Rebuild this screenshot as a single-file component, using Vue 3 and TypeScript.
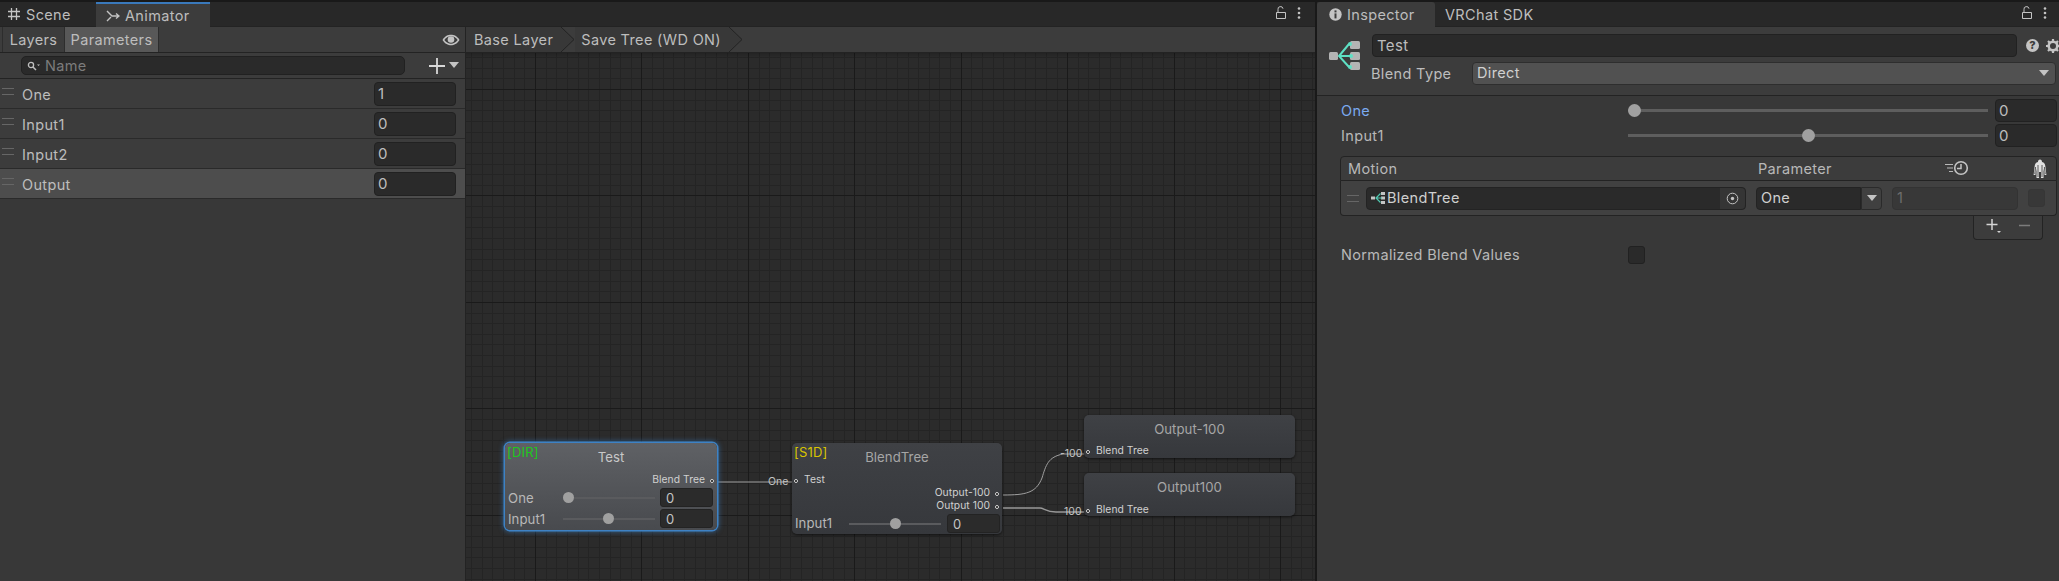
<script setup lang="ts">
interface Param { name: string; value: string; selected?: boolean }
interface GridLine { pos: number; major: boolean }

const params: Param[] = [
  { name: 'One', value: '1' },
  { name: 'Input1', value: '0' },
  { name: 'Input2', value: '0' },
  { name: 'Output', value: '0', selected: true },
]
const crumbs: string[] = ['Base Layer', 'Save Tree (WD ON)']

const step = 10.643
function gridLines(origin: number, extent: number): GridLine[] {
  const lines: GridLine[] = []
  for (let i = -10; i * step + origin < extent; i++) {
    const pos = Math.round(i * step + origin)
    if (pos >= 0) lines.push({ pos: pos + 0.5, major: ((i % 10) + 10) % 10 === 0 })
  }
  return lines
}
const verticals = gridLines(69, 850)
const horizontals = gridLines(36, 530)
</script>

<template>
  <div class="app">
    <section class="animator">
      <header class="tabbar">
        <div class="tab scene-tab">
          <svg class="ti" width="14" height="14" viewBox="0 0 14 14"><path d="M4.500 1v12M9.500 1v12M1 4.500h12M1 9.500h12" stroke="#c4c4c4" stroke-width="1.300" fill="none"/></svg>
          <span>Scene</span>
        </div>
        <div class="tab active anim-tab">
          <svg class="ti" width="14" height="14" viewBox="0 0 14 14"><path d="M1 2l5 5h6M1 12l4-4M10 4.500l3 2.500-3 2.500" stroke="#c4c4c4" stroke-width="1.400" fill="none"/></svg>
          <span>Animator</span>
        </div>
        <div class="tab-tools">
          <svg width="14" height="14" viewBox="0 0 14 14"><path d="M2.500 6.500h9v6h-9zM4 6.500V3.500a2.500 2.500 0 0 1 5 -.8" stroke="#c4c4c4" stroke-width="1" fill="none"/></svg>
          <svg width="4" height="14" viewBox="0 0 4 14"><circle cx="2" cy="2.500" r="1.300" fill="#c4c4c4"/><circle cx="2" cy="7" r="1.300" fill="#c4c4c4"/><circle cx="2" cy="11.500" r="1.300" fill="#c4c4c4"/></svg>
        </div>
      </header>

      <div class="anim-body">
        <aside class="left">
          <div class="left-toolbar">
            <div class="seg">Layers</div>
            <div class="seg on">Parameters</div>
            <svg class="eye" width="18" height="12" viewBox="0 0 18 12"><path d="M0.500 6C3 2 6 .8 9 .8S15 2 17.500 6C15 10 12 11.200 9 11.200S3 10 .5 6z" fill="#c4c4c4"/><path d="M2.300 6C4.500 3.300 6.500 2.300 9 2.300S13.500 3.300 15.700 6C13.500 8.700 11.500 9.700 9 9.700S4.500 8.700 2.300 6z" fill="#3c3c3c"/><circle cx="9" cy="5.500" r="3.300" fill="#c4c4c4"/></svg>
          </div>
          <div class="search-row">
            <div class="search">
              <svg width="13" height="10" viewBox="0 0 13 10"><circle cx="4" cy="4" r="2.600" stroke="#c0c0c0" stroke-width="1.300" fill="none"/><path d="M6 6l3 3" stroke="#c0c0c0" stroke-width="1.500"/><path d="M10 3.500h3l-1.500 1.500z" fill="#c0c0c0"/></svg>
              <span>Name</span>
            </div>
            <svg class="plus" width="16" height="16" viewBox="0 0 16 16"><path d="M8 0v16M0 8h16" stroke="#d8d8d8" stroke-width="1.800"/></svg>
            <svg class="caret" width="10" height="6" viewBox="0 0 10 6"><path d="M0 0h10L5 6z" fill="#c4c4c4"/></svg>
          </div>
          <div v-for="p in params" :key="p.name" class="param" :class="{ selected: p.selected }">
            <span class="grip"></span>
            <span class="pname">{{ p.name }}</span>
            <span class="pvalue">{{ p.value }}</span>
          </div>
        </aside>

        <main class="center">
          <nav class="crumbs">
            <div v-for="c in crumbs" :key="c" class="crumb">
              <span>{{ c }}</span>
              <svg width="14" height="25" viewBox="0 0 14 25"><path d="M0 0l13 12.500L0 25z" fill="#383838"/><path d="M0 0l13 12.500L0 25" stroke="#232323" fill="none"/></svg>
            </div>
          </nav>
          <div class="graph">
            <svg class="wires" width="850" height="529" viewBox="0 0 850 529" shape-rendering="crispEdges">
              <template v-for="v in verticals" :key="'v' + v.pos">
                <line v-if="!v.major" :x1="v.pos" :x2="v.pos" y1="0" y2="529" stroke="#242424"/>
              </template>
              <template v-for="h in horizontals" :key="'h' + h.pos">
                <line v-if="!h.major" :y1="h.pos" :y2="h.pos" x1="0" x2="850" stroke="#242424"/>
              </template>
              <template v-for="v in verticals" :key="'mv' + v.pos">
                <line v-if="v.major" :x1="v.pos" :x2="v.pos" y1="0" y2="529" stroke="#1a1a1a"/>
              </template>
              <template v-for="h in horizontals" :key="'mh' + h.pos">
                <line v-if="h.major" :y1="h.pos" :y2="h.pos" x1="0" x2="850" stroke="#1a1a1a"/>
              </template>
            </svg>
            <svg class="wires" width="850" height="529" viewBox="0 0 850 529">
              <path d="M251 429H326" stroke="#a0a0a0" stroke-width="1" fill="none"/>
              <path d="M537 442C560 442 570 440 576 425C580 412 582 404 597 401H618" stroke="#a0a0a0" stroke-width="1" fill="none"/>
              <path d="M537 455H574C578 455 580 459 590 459H618" stroke="#989898" stroke-width="1.400" fill="none"/>
            </svg>
            <span class="wlabel" style="left:302px;top:421px">One</span>
            <span class="wlabel" style="left:594px;top:393px">-100</span>
            <span class="wlabel" style="left:598px;top:451px">100</span>

            <div class="node dir">
              <b class="tag green">[DIR]</b>
              <div class="ntitle bright">Test</div>
              <div class="nout"><span>Blend Tree</span><i class="port"></i></div>
              <div class="nrow"><label>One</label><div class="mini"><em style="left:0"></em></div><div class="nfield">0</div></div>
              <div class="nrow"><label>Input1</label><div class="mini"><em style="left:40px"></em></div><div class="nfield">0</div></div>
            </div>

            <div class="node s1d">
              <b class="tag yellow">[S1D]</b>
              <div class="ntitle">BlendTree</div>
              <div class="nin"><i class="port"></i><span>Test</span></div>
              <div class="nout two"><span>Output-100</span><i class="port"></i></div>
              <div class="nout two"><span>Output 100</span><i class="port"></i></div>
              <div class="nrow"><label>Input1</label><div class="mini"><em style="left:41px"></em></div><div class="nfield">0</div></div>
            </div>

            <div class="node out o1">
              <div class="ntitle">Output-100</div>
              <div class="nin"><i class="port"></i><span>Blend Tree</span></div>
            </div>
            <div class="node out o2">
              <div class="ntitle">Output100</div>
              <div class="nin"><i class="port"></i><span>Blend Tree</span></div>
            </div>
          </div>
        </main>
      </div>
    </section>

    <section class="inspector">
      <header class="tabbar">
        <div class="tab active insp-tab">
          <svg class="ti" width="13" height="13" viewBox="0 0 13 13"><circle cx="6.500" cy="6.500" r="6.200" fill="#c4c4c4"/><rect x="5.500" y="2.400" width="2" height="2" fill="#3c3c3c"/><rect x="5.500" y="5.400" width="2" height="5" fill="#3c3c3c"/></svg>
          <span>Inspector</span>
        </div>
        <div class="tab sdk-tab"><span>VRChat SDK</span></div>
        <div class="tab-tools insp-tools">
          <svg width="14" height="14" viewBox="0 0 14 14"><path d="M2.500 6.500h9v6h-9zM4 6.500V3.500a2.500 2.500 0 0 1 5 -.8" stroke="#c4c4c4" stroke-width="1" fill="none"/></svg>
          <svg width="4" height="14" viewBox="0 0 4 14"><circle cx="2" cy="2.500" r="1.300" fill="#c4c4c4"/><circle cx="2" cy="7" r="1.300" fill="#c4c4c4"/><circle cx="2" cy="11.500" r="1.300" fill="#c4c4c4"/></svg>
        </div>
      </header>

      <div class="insp-head">
        <svg class="tree-big" width="32" height="32" viewBox="0 0 32 32">
          <rect x="0" y="13" width="9" height="8" rx="1.500" fill="#b4b4b4"/>
          <rect x="21" y="2" width="10" height="8" rx="1.500" fill="#b4b4b4"/>
          <rect x="21" y="13" width="10" height="8" rx="1.500" fill="#b4b4b4"/>
          <rect x="21" y="23" width="10" height="8" rx="1.500" fill="#b4b4b4"/>
          <path d="M10 17H22M20 5L10 17L20 28" stroke="#5ee0c4" stroke-width="2" fill="none"/>
          <circle cx="21" cy="5" r="2" fill="#5ee0c4"/><circle cx="21" cy="28" r="2" fill="#5ee0c4"/><circle cx="22" cy="17" r="2" fill="#5ee0c4"/>
        </svg>
        <div class="head-fields">
          <div class="name-row">
            <div class="name-field">Test</div>
            <span class="help">?</span>
            <svg class="gear" width="14" height="14" viewBox="0 0 14 14"><circle cx="7" cy="7" r="4.300" stroke="#c4c4c4" stroke-width="2.600" fill="none"/><path d="M7 0v3M7 11v3M0 7h3M11 7h3M2 2l2 2M10 10l2 2M12 2l-2 2M4 10l-2 2" stroke="#c4c4c4" stroke-width="2.200"/></svg>
          </div>
          <div class="type-row">
            <span class="type-label">Blend Type</span>
            <div class="type-drop"><span>Direct</span><svg width="10" height="6" viewBox="0 0 10 6"><path d="M0 0h10L5 6z" fill="#c4c4c4"/></svg></div>
          </div>
        </div>
      </div>

      <div class="insp-body">
        <div class="srow">
          <span class="slabel blue">One</span>
          <div class="track"><em style="left:0"></em></div>
          <div class="sfield">0</div>
        </div>
        <div class="srow">
          <span class="slabel">Input1</span>
          <div class="track"><em style="left:174px"></em></div>
          <div class="sfield">0</div>
        </div>

        <div class="table">
          <div class="thead">
            <span class="tmotion">Motion</span>
            <span class="tparam">Parameter</span>
            <svg class="tclock" width="26" height="16" viewBox="0 0 26 16"><path d="M1 4.500h8M3 8h6M5 11.500h4" stroke="#b8b8b8" stroke-width="1.200"/><circle cx="17" cy="8" r="6.300" stroke="#c4c4c4" stroke-width="1.600" fill="none"/><path d="M17 4v4.500h-4" stroke="#c4c4c4" stroke-width="1.500" fill="none"/></svg>
            <svg class="tman" width="16" height="20" viewBox="0 0 16 20">
              <path d="M8 .5c1.300 0 2 1 2 2.500 2.400 .6 3 2 3.400 4.500l1 8.500h-1.800l-1.100-6.500V19H9V13H7v6H4.500V9.500L3.400 16H1.600l1-8.500C3 5 3.600 3.600 6 3 6 1.500 6.700 .5 8 .5z" fill="#e0e0e0"/>
              <path d="M6 6v12M10 6v12M3.600 8l-.8 7M12.400 8l.8 7" stroke="#4a4a4a" stroke-width=".9"/>
            </svg>
          </div>
          <div class="trow">
            <span class="grip tgrip"></span>
            <div class="objfield">
              <svg width="14" height="12" viewBox="0 0 14 12"><rect x="0" y="4.500" width="4" height="3" fill="#c4c4c4"/><rect x="10" y="0" width="4" height="3" fill="#c4c4c4"/><rect x="10" y="4.500" width="4" height="3" fill="#c4c4c4"/><rect x="10" y="9" width="4" height="3" fill="#c4c4c4"/><path d="M5 6h6M9.500 1.500L5 6l4.500 4.500" stroke="#4fc8b0" stroke-width="1.200" fill="none"/></svg>
              <span class="objname">BlendTree</span>
              <div class="picker"><svg width="13" height="13" viewBox="0 0 13 13"><circle cx="6.500" cy="6.500" r="5.300" stroke="#c4c4c4" fill="none"/><circle cx="6.500" cy="6.500" r="1.700" fill="#c4c4c4"/></svg></div>
            </div>
            <div class="param-drop"><span>One</span></div>
            <div class="param-btn"><svg width="10" height="6" viewBox="0 0 10 6"><path d="M0 0h10L5 6z" fill="#c4c4c4"/></svg></div>
            <div class="thresh">1</div>
            <div class="mirror"></div>
          </div>
          <div class="tfoot">
            <svg width="16" height="16" viewBox="0 0 16 16"><path d="M6 1v11M.5 6.500h11" stroke="#d4d4d4" stroke-width="1.500"/><path d="M11 13h4l-2 2z" fill="#d4d4d4"/></svg>
            <svg width="11" height="3" viewBox="0 0 11 3"><path d="M0 1.500h11" stroke="#7c7c7c" stroke-width="1.500"/></svg>
          </div>
        </div>

        <div class="norm">
          <span class="slabel">Normalized Blend Values</span>
          <div class="check"></div>
        </div>
      </div>
    </section>
  </div>
</template>

<style>
html, body { margin: 0; background: #191919; }
</style>

<style scoped>
.app {
  width: 2059px; height: 581px; display: flex; overflow: hidden; background: #191919;
  padding-top: 2px; box-sizing: border-box;
  font-family: Inter, "Noto Sans", sans-serif; font-size: 14.500px; letter-spacing: .35px; color: #bdbdbd;
}
.animator { width: 1315px; display: flex; flex-direction: column; margin-right: 2px; }
.inspector { flex: 1; display: flex; flex-direction: column; background: #383838; min-width: 0; }
.tabbar { height: 24px; flex: none; background: #282828; display: flex; align-items: stretch; position: relative; border-bottom: 1px solid #232323; }
.tab { display: flex; align-items: center; gap: 5px; box-sizing: border-box; }
.scene-tab { width: 95px; padding-left: 7px; }
.anim-tab { width: 114px; margin-left: 1px; padding-left: 10px; }
.active { background: #3c3c3c; margin-bottom: -1px; }
.anim-tab { border-top: 2px solid #3a79bb; }
.insp-tab { width: 118px; padding-left: 12px; border-radius: 3px 3px 0 0; }
.sdk-tab { padding-left: 10px; }
.tab-tools { margin-left: auto; display: flex; align-items: center; gap: 9px; padding-right: 14px; padding-bottom: 2px; }
.insp-tools { padding-right: 12px; }
.anim-body { flex: 1; display: flex; min-height: 0; }
.left { width: 466px; flex: none; background: #383838; border-right: 1px solid #232323; box-sizing: border-box; }
.left-toolbar { height: 26px; background: #3c3c3c; border-bottom: 1px solid #232323; display: flex; box-sizing: border-box; padding-left: 2px; align-items: stretch; }
.seg { display: flex; align-items: center; justify-content: center; border-left: 1px solid #2d2d2d; width: 62px; padding-bottom: 1px; box-sizing: border-box; }
.seg.on { width: 95px; background: #585858; border-right: 1px solid #2d2d2d; }
.eye { margin: auto 5px auto auto; }
.search-row { height: 26px; background: #3c3c3c; border-bottom: 1px solid #232323; box-sizing: border-box; display: flex; align-items: center; padding-left: 21px; }
.search { width: 384px; height: 19px; background: #2a2a2a; border: 1px solid #212121; border-radius: 5px; box-sizing: border-box; display: flex; align-items: center; padding-left: 5px; gap: 5px; color: #7c7c7c; }
.plus { margin-left: 24px; }
.caret { margin-left: 4px; margin-top: -2px; }
.param { height: 30px; display: flex; align-items: center; box-sizing: border-box; border-bottom: 1px solid #2a2a2a; background: #3c3c3c; padding-left: 2px; }
.param:first-of-type { height: 32px; }
.param.selected { background: #4d4d4d; }
.grip { width: 12px; height: 5px; flex: none; border-top: 1px solid #666; border-bottom: 1px solid #666; margin-top: -4px; }
.pname { margin-left: 8px; width: 352px; padding-top: 1px; }
.pvalue { width: 82px; height: 24px; box-sizing: border-box; background: #2a2a2a; border: 1px solid #212121; border-radius: 4px; padding-left: 3px; line-height: 22px; font-size: 15px; }
.center { flex: 1; display: flex; flex-direction: column; min-width: 0; }
.crumbs { height: 26px; flex: none; background: #3c3c3c; display: flex; border-bottom: 1px solid #232323; box-sizing: border-box; }
.crumb { display: flex; align-items: center; gap: 8px; padding-left: 8px; background: linear-gradient(#383838, #383838) no-repeat left / calc(100% - 14px) 100%; }
.crumb + .crumb { padding-left: 6px; }
.crumb svg { flex: none; }
.graph { flex: 1; position: relative; overflow: hidden; background-color: #2b2b2b; }
.graph::after { content: ""; position: absolute; left: 0; right: 0; top: 0; height: 5px; background: linear-gradient(rgba(0,0,0,.18), transparent); }
.wires { position: absolute; left: 0; top: 0; }
.wlabel { position: absolute; font-size: 10.500px; letter-spacing: 0; color: #c4c4c4; line-height: 16px; z-index: 2; }
.node { position: absolute; box-sizing: border-box; border-radius: 5px; background: linear-gradient(#3f4145, #36383c); box-shadow: 0 1px 3px rgba(0,0,0,.6); font-size: 10.300px; letter-spacing: .05px; }
.dir { left: 39px; top: 390px; width: 212px; height: 87px; background: linear-gradient(#5f6165, #484a4e); box-shadow: 0 0 0 1.500px #3e82c4, 0 0 5px 2px rgba(58,130,200,.55); }
.s1d { left: 326px; top: 390px; width: 210px; height: 91px; }
.out { left: 618px; width: 211px; height: 43px; }
.o1 { top: 362px; }
.o2 { top: 420px; }
.tag { position: absolute; left: 2px; top: 1px; font-weight: 400; font-size: 13px; letter-spacing: .2px; line-height: 16px; }
.green { color: #1ec81e; }
.yellow { color: #d8c400; }
.ntitle { position: absolute; left: 0; right: 0; top: 6px; text-align: center; font-size: 13.200px; line-height: 17px; color: #a6a6a6; }
.ntitle.bright { color: #c8c8c8; }
.nout { position: absolute; right: 3px; top: 29px; display: flex; align-items: center; gap: 5px; line-height: 15px; color: #d0d0d0; }
.nout.two { top: 42px; }
.nout.two + .nout.two { top: 55px; }
.nin { position: absolute; left: 2px; display: flex; align-items: center; gap: 6px; line-height: 15px; color: #d0d0d0; }
.s1d .nin { top: 29px; }
.o1 .nin { top: 28px; }
.o2 .nin { top: 29px; }
.port { width: 2px; height: 2px; border-radius: 50%; background: #000; border: 1px solid #ddd; display: block; flex: none; margin-top: 2px; }
.nrow { position: absolute; left: 3px; right: 4px; display: flex; align-items: center; font-size: 13.200px; color: #b8b8b8; }
.dir .nrow { top: 45px; height: 19px; }
.dir .nrow + .nrow { top: 66px; }
.s1d .nrow { top: 71px; height: 19px; right: 2px; }
.nrow label { width: 55px; flex: none; }
.s1d .nrow label { width: 54px; margin-top: -2px; }
.mini { width: 92px; height: 2px; background: #5a5b5e; position: relative; }
.mini em { position: absolute; top: -5px; width: 11px; height: 11px; border-radius: 50%; background: #a0a0a0; }
.nfield { margin-left: auto; width: 53px; height: 19px; background: #2b2b2b; border: 1px solid #232323; border-radius: 3px; box-sizing: border-box; padding-left: 5px; line-height: 18px; font-size: 13px; color: #c4c4c4; }
.insp-head { height: 69px; flex: none; background: #3c3c3c; border-bottom: 1px solid #232323; box-sizing: border-box; display: flex; padding: 7px 3px 0 12px; }
.tree-big { margin-top: 5px; flex: none; }
.head-fields { margin-left: 11px; flex: 1; min-width: 0; }
.name-row { display: flex; align-items: center; height: 23px; }
.name-field { width: 645px; flex: none; height: 23px; background: #2a2a2a; border: 1px solid #212121; border-radius: 4px; box-sizing: border-box; padding-left: 4px; line-height: 21px; font-size: 15px; }
.help { width: 13px; height: 13px; flex: none; border-radius: 50%; background: #c4c4c4; color: #3c3c3c; font-weight: 800; font-size: 11px; letter-spacing: 0; line-height: 13px; text-align: center; margin-left: 9px; margin-right: 7px; }
.gear { flex: none; }
.type-row { display: flex; align-items: center; height: 23px; margin-top: 5px; }
.type-label { width: 101px; flex: none; margin-left: -1px; padding-bottom: 1px; }
.type-drop { flex: 1; height: 23px; background: #515151; border: 1px solid #2e2e2e; border-radius: 4px; box-sizing: border-box; display: flex; align-items: center; justify-content: space-between; padding: 0 6px 2px 4px; color: #d0d0d0; }
.insp-body { flex: 1; padding: 2px 2px 0 24px; box-sizing: border-box; }
.srow { height: 25px; display: flex; align-items: center; }
.slabel { width: 287px; flex: none; color: #b8b8b8; }
.blue { color: #7baaf0; }
.track { width: 360px; height: 3px; background: #5e5e5e; position: relative; flex: none; }
.track em { position: absolute; left: 0; top: -5px; width: 13px; height: 13px; border-radius: 50%; background: #a0a0a0; }
.sfield { width: 62px; margin-left: 7px; height: 23px; background: #2a2a2a; border: 1px solid #212121; border-radius: 4px; box-sizing: border-box; padding-left: 3px; line-height: 21px; font-size: 15px; }
.table { margin: 8px 0 0 -1px; width: 717px; position: relative; height: 84px; }
.thead { height: 25px; background: #3c3c3c; border: 1px solid #232323; border-radius: 4px 4px 0 0; box-sizing: border-box; position: relative; color: #b8b8b8; }
.tmotion { position: absolute; left: 7px; top: 3px; }
.tparam { position: absolute; left: 417px; top: 3px; }
.tclock { position: absolute; left: 603px; top: 3px; }
.tman { position: absolute; left: 691px; top: 2px; }
.trow { height: 35px; background: #414141; border: 1px solid #232323; border-top: 0; border-radius: 0 0 4px 4px; box-sizing: border-box; display: flex; align-items: center; position: relative; }
.tgrip { margin-left: 6px; margin-top: 0; }
.objfield { margin-left: 7px; width: 380px; height: 23px; background: #2a2a2a; border-radius: 4px; border: 1px solid #232323; box-sizing: border-box; display: flex; align-items: center; padding-left: 4px; gap: 2px; position: relative; }
.objname { color: #d0d0d0; padding-bottom: 1px; }
.picker { position: absolute; right: 0; top: 0; bottom: 0; width: 25px; background: #353535; border-radius: 0 4px 4px 0; display: flex; align-items: center; justify-content: center; }
.param-drop { margin-left: 10px; width: 105px; height: 23px; background: #2a2a2a; border: 1px solid #232323; border-radius: 4px 0 0 4px; box-sizing: border-box; padding-left: 4px; line-height: 20px; color: #d0d0d0; }
.param-btn { width: 21px; height: 23px; background: #404040; border: 1px solid #2a2a2a; border-radius: 0 4px 4px 0; box-sizing: border-box; display: flex; align-items: center; justify-content: center; }
.thresh { margin-left: 10px; width: 126px; height: 23px; background: #383838; border: 1px solid #333; border-radius: 4px; box-sizing: border-box; padding-left: 4px; line-height: 20px; color: #6e6e6e; }
.mirror { margin-left: 10px; width: 17px; height: 18px; background: #383838; border: 1px solid #363636; border-radius: 3px; box-sizing: border-box; }
.tfoot { position: absolute; right: 14px; top: 60px; width: 70px; height: 24px; background: #3c3c3c; border: 1px solid #232323; border-top: 0; border-radius: 0 0 4px 4px; box-sizing: border-box; display: flex; align-items: center; justify-content: center; gap: 17px; padding-bottom: 4px; }
.norm { margin-top: 1px; display: flex; align-items: center; height: 25px; padding-top: 1px; }
.check { width: 17px; height: 18px; background: #2a2a2a; border: 1px solid #212121; border-radius: 3px; box-sizing: border-box; }
</style>
